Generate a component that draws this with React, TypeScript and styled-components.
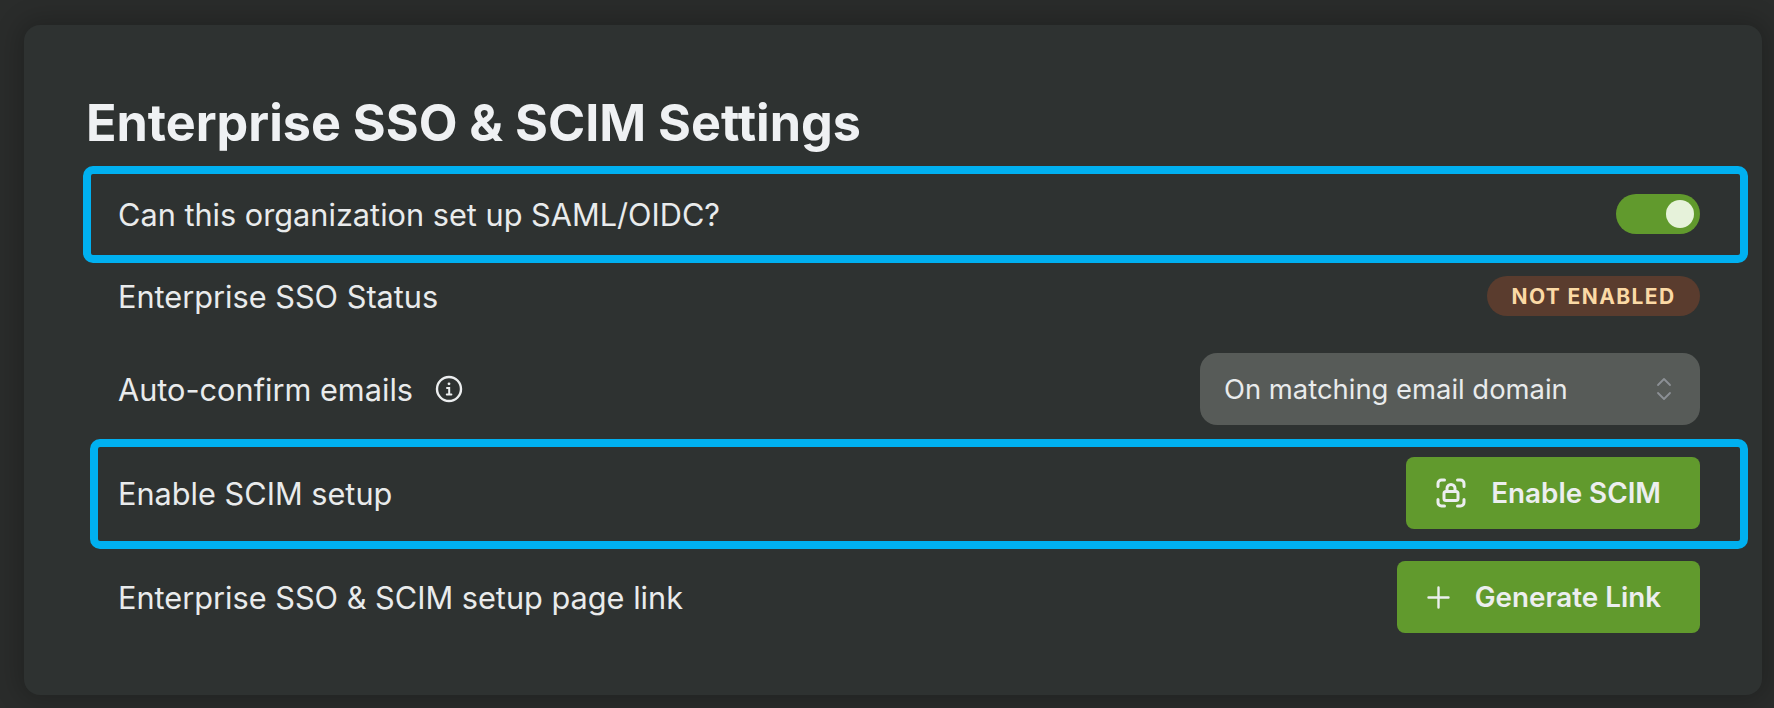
import React from "react";
import styled, { createGlobalStyle } from "styled-components";

const Global = createGlobalStyle`
  html, body { margin: 0; padding: 0; background: #2a2c2b; }
  * { box-sizing: border-box; }
  body { font-family: Inter, "Noto Sans", sans-serif; -webkit-font-smoothing: antialiased; }
`;
const Page = styled.div`
  width: 1774px; height: 708px; overflow: hidden;
  padding: 25px 12px 13px 24px;
  background: #2a2c2b;
`;
const Panel = styled.section`
  height: 670px;
  padding: 66px 62px 46px 62px;
  background: #2e3231;
  border-radius: 16px;
  box-shadow: 0 0 24px 6px rgba(0, 0, 0, 0.2);
`;
const Title = styled.h1`
  margin: 0; height: 82px;
  padding-top: 3px;
  font-size: 50.3px; line-height: 58px; font-weight: 700;
  color: #eff1f3;
`;
const Row = styled.div<{ $h: number }>`
  position: relative;
  display: flex; align-items: center; justify-content: space-between;
  height: ${p => p.$h}px;
  padding-left: 32px;
`;
const Label = styled.span`
  display: flex; align-items: center; gap: 22px;
  font-size: 30.7px; color: #e9ebec;
`;
const Marker = styled.div<{ $left: number; $top: number; $bottom: number }>`
  position: absolute;
  left: ${p => p.$left}px; right: -48px; top: ${p => p.$top}px; bottom: ${p => p.$bottom}px;
  border: 8px solid #00b0f0;
  border-radius: 10px;
  pointer-events: none;
`;
const Toggle = styled.div`
  width: 84px; height: 40px; border-radius: 20px;
  background: #619a2d;
  display: flex; align-items: center; justify-content: flex-end;
  padding-right: 6px;
`;
const Knob = styled.div`
  width: 28px; height: 28px; border-radius: 50%;
  background: #e6f2da;
`;
const Pill = styled.span`
  display: flex; align-items: center; justify-content: center;
  width: 213px; height: 40px; border-radius: 20px;
  background: #5a3c2e; color: #fbd9a5;
  font-size: 21px; font-weight: 700; letter-spacing: 1.4px;
`;
const Select = styled.div`
  display: flex; align-items: center; justify-content: space-between;
  width: 500px; height: 72px;
  padding: 0 28px 0 24px;
  border-radius: 17px;
  background: #575b58; color: #e9ebec;
  font-size: 27.4px;
`;
const Button = styled.button`
  display: flex; align-items: center; gap: 25px;
  height: 72px; padding: 0 39px 0 30px;
  border: 0; border-radius: 8px;
  background: #619a2d; color: #eceeef;
  font-family: inherit; font-size: 27.8px; font-weight: 600;
`;

const InfoIcon = () => (
  <svg width="28" height="28" viewBox="0 0 28 28" fill="none" stroke="#eceeef" strokeWidth="2.4" strokeLinecap="round">
    <circle cx="14" cy="14" r="12" />
    <path d="M12 13h2.2v6.200M11.800 19.400h4.600" strokeWidth="2" />
    <circle cx="14" cy="8.800" r="1.400" fill="#eceeef" stroke="none" />
  </svg>
);
const Chevrons = () => (
  <svg width="16" height="26" viewBox="0 0 16 26" fill="none" stroke="#8c9095" strokeWidth="1.8" strokeLinecap="round" strokeLinejoin="round">
    <path d="M2 9l6-6 6 6M2 17l6 6 6-6" />
  </svg>
);
const ScanLock = () => (
  <svg width="30" height="30" viewBox="0 0 30 30" fill="none" stroke="#eceeef" strokeWidth="3" strokeLinecap="round" strokeLinejoin="round">
    <path d="M2 8.500V5.500A3.500 3.500 0 0 1 5.500 2H8.500M21.500 2h3A3.500 3.500 0 0 1 28 5.500V8.500M28 21.500v3a3.500 3.500 0 0 1-3.500 3.500H21.500M8.500 28H5.500A3.500 3.500 0 0 1 2 24.500V21.500" />
    <rect x="8" y="13.500" width="14" height="9" rx="2" />
    <path d="M11 13.500v-3a4 4 0 0 1 8 0V13.500" />
  </svg>
);
const PlusIcon = () => (
  <svg width="23" height="23" viewBox="0 0 23 23" fill="none" stroke="#eceeef" strokeWidth="2.400" strokeLinecap="round">
    <path d="M11.500 1.500v20M1.500 11.500h20" />
  </svg>
);

export default function App() {
  return (
    <>
      <Global />
      <Page>
        <Panel>
          <Title>Enterprise SSO &amp; SCIM Settings</Title>
          <Row $h={82}>
            <Label>Can this organization set up SAML/OIDC?</Label>
            <Toggle><Knob /></Toggle>
            <Marker $left={-3} $top={-7} $bottom={-8} />
          </Row>
          <Row $h={82}>
            <Label>Enterprise SSO Status</Label>
            <Pill>NOT ENABLED</Pill>
          </Row>
          <Row $h={104}>
            <Label>Auto-confirm emails <InfoIcon /></Label>
            <Select>On matching email domain <Chevrons /></Select>
          </Row>
          <Row $h={104}>
            <Label>Enable SCIM setup</Label>
            <Button><ScanLock />Enable SCIM</Button>
            <Marker $left={4} $top={-2} $bottom={-4} />
          </Row>
          <Row $h={104}>
            <Label>Enterprise SSO &amp; SCIM setup page link</Label>
            <Button><PlusIcon />Generate Link</Button>
          </Row>
        </Panel>
      </Page>
    </>
  );
}
